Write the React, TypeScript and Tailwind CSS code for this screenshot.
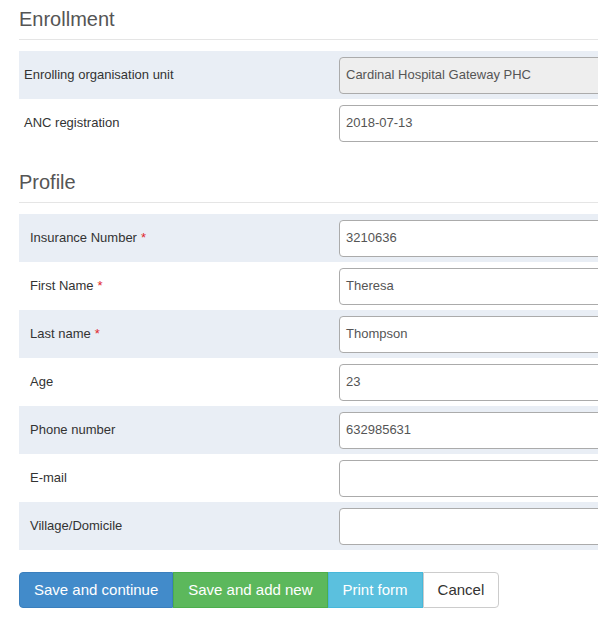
import React from "react";

const font = { fontFamily: '"Liberation Sans", Arial, sans-serif' };

function Row({ label, value, shaded, required, disabled, indent }: { label: string; value: string; shaded: boolean; required?: boolean; disabled?: boolean; indent?: boolean }) {
  return (
    <div className={`flex h-[48px] items-center ${shaded ? "bg-[#e9eef5]" : "bg-white"}`}>
      <div className={`w-[320px] shrink-0 text-[13px] text-[#333] ${indent ? "pl-[11px]" : "pl-[5px]"}`}>
        {label}
        {required && <span className="ml-[4px] text-[#e0262c]">*</span>}
      </div>
      <div className={`flex h-[37px] w-[300px] shrink-0 items-center rounded-[4px] border border-[#ababab] px-[6px] text-[13px] text-[#555] ${disabled ? "bg-[#eeeeee]" : "bg-white"}`}>
        {value}
      </div>
    </div>
  );
}

export default function App() {
  return (
    <div className="h-[644px] w-[598px] overflow-hidden bg-white" style={font}>
      <div className="w-[640px] pl-[19px]">
        <h2 className="pt-[7px] text-[20px] leading-[24px] text-[#555]">Enrollment</h2>
        <div className="mt-[8px] border-b border-[#e5e5e5]" />
        <div className="mt-[11px]">
          <Row label="Enrolling organisation unit" value="Cardinal Hospital Gateway PHC" shaded disabled />
          <Row label="ANC registration" value="2018-07-13" shaded={false} />
        </div>
        <h2 className="mt-[23px] text-[20px] leading-[24px] text-[#555]">Profile</h2>
        <div className="mt-[8px] border-b border-[#e5e5e5]" />
        <div className="mt-[11px]">
          <Row label="Insurance Number" value="3210636" shaded required indent />
          <Row label="First Name" value="Theresa" shaded={false} required indent />
          <Row label="Last name" value="Thompson" shaded required indent />
          <Row label="Age" value="23" shaded={false} indent />
          <Row label="Phone number" value="632985631" shaded indent />
          <Row label="E-mail" value="" shaded={false} indent />
          <Row label="Village/Domicile" value="" shaded indent />
        </div>
        <div className="mt-[22px] flex h-[36px] text-[15px]">
          <button className="h-full rounded-l-[4px] border border-[#3a7fbd] bg-[#428bca] px-[14px] text-white">Save and continue</button>
          <button className="h-full border border-[#4cae4c] bg-[#5cb85c] px-[14px] text-white">Save and add new</button>
          <button className="h-full border border-[#46b8da] bg-[#5bc0de] px-[14px] text-white">Print form</button>
          <button className="h-full rounded-r-[4px] border border-[#cccccc] bg-white px-[14px] text-[#333]">Cancel</button>
        </div>
      </div>
    </div>
  );
}
